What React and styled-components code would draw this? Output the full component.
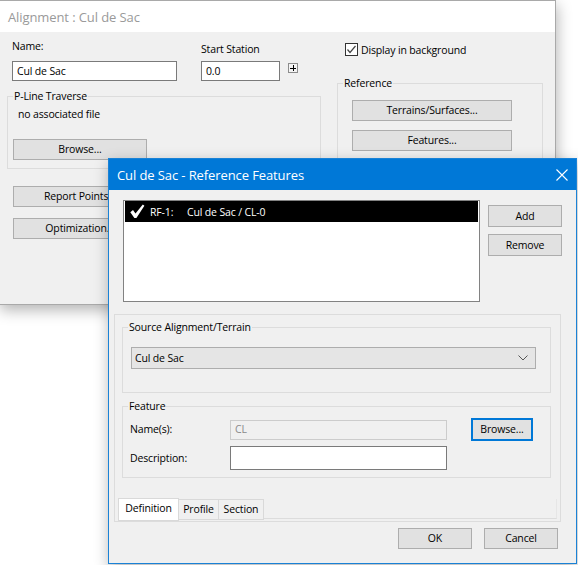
import React from "react";
import styled, { createGlobalStyle } from "styled-components";

const GlobalStyle = createGlobalStyle`
  html, body {
    margin: 0;
    padding: 0;
    background: #fff;
  }
  body {
    font-family: "Open Sans", "Noto Sans", sans-serif;
    font-size: 10.5px;
    letter-spacing: -0.15px;
    color: #000;
  }
  * {
    box-sizing: border-box;
  }
`;

const Desktop = styled.div`
  position: relative;
  width: 578px;
  height: 565px;
  overflow: hidden;
  background: #fff;
`;

/* windows sit on a free desktop, so their place is the content */
const Window = styled.div`
  position: absolute;
  left: ${p => p.$left}px;
  top: ${p => p.$top}px;
  width: ${p => p.$width}px;
  height: ${p => p.$height}px;
  border: 1px solid ${p => (p.$active ? "#1a82d6" : "#a9a9a9")};
  background: #f0f0f0;
  box-shadow: 1px 5px 14px rgba(0, 0, 0, 0.3);
  display: flex;
  flex-direction: column;
`;

const TitleBar = styled.div`
  flex: none;
  height: 31px;
  display: flex;
  align-items: center;
  justify-content: space-between;
  padding: 0 7px 0 8px;
  background: ${p => (p.$active ? "#0078d7" : "#fff")};
  color: ${p => (p.$active ? "#fff" : "#9a9a9a")};
  font-size: 13px;
  letter-spacing: -0.1px;
`;

const CloseIcon = styled.svg`
  width: 14px;
  height: 14px;
  display: block;
`;

const Label = styled.div`
  line-height: 15px;
  height: 15px;
  white-space: nowrap;
`;

const TextInput = styled.div`
  width: ${p => p.$width}px;
  height: ${p => p.$height || 20}px;
  border: 1px solid ${p => (p.$disabled ? "#cccccc" : "#7a7a7a")};
  background: ${p => (p.$disabled ? "#f0f0f0" : "#fff")};
  color: ${p => (p.$disabled ? "#8a8a8a" : "#000")};
  padding: 0 4px;
  display: flex;
  align-items: center;
  line-height: 15px;
`;

const Button = styled.div`
  width: ${p => p.$width}px;
  height: ${p => p.$height || 21}px;
  margin-top: ${p => p.$mt || 0}px;
  margin-left: ${p => p.$ml || 0}px;
  flex: none;
  background: #e1e1e1;
  border: ${p => (p.$focused ? "2px solid #0078d7" : "1px solid #adadad")};
  display: flex;
  align-items: center;
  justify-content: center;
  white-space: nowrap;
  line-height: 15px;
`;

const Group = styled.fieldset`
  margin: ${p => p.$mt || 0}px 0 0 ${p => p.$ml || 0}px;
  width: ${p => p.$width}px;
  padding: 0 0 ${p => p.$pb || 0}px 0;
  border: 1px solid #dcdcdc;
  min-width: 0;
  display: flex;
  flex-direction: column;
  align-items: flex-start;
`;

const Legend = styled.legend`
  margin-left: 5px;
  padding: 0 1px;
  line-height: 15px;
  height: 15px;
`;

/* ---------- background window ---------- */

const BackBody = styled.div`
  display: flex;
  padding-left: 7px;
`;

const LeftCol = styled.div`
  width: 314px;
  display: flex;
  flex-direction: column;
  align-items: flex-start;
`;

const FieldsRow = styled.div`
  display: flex;
  align-items: flex-end;
  padding: 7px 0 0 5px;
`;

const Field = styled.div`
  display: flex;
  flex-direction: column;
  margin-left: ${p => p.$ml || 0}px;
  ${Label} {
    margin-top: ${p => p.$labelTop || 0}px;
    margin-bottom: ${p => p.$gap}px;
  }
`;

const PlusButton = styled.div`
  width: 10px;
  height: 10px;
  margin: 0 0 8px 8px;
  border: 1px solid #8c8c8c;
  background: #f4f4f4;
  position: relative;
  &::before,
  &::after {
    content: "";
    position: absolute;
    background: #000;
  }
  &::before {
    left: 1px;
    top: 3.5px;
    width: 6px;
    height: 1px;
  }
  &::after {
    left: 3.5px;
    top: 1px;
    width: 1px;
    height: 6px;
  }
`;

const Note = styled.div`
  margin: 3px 0 0 10px;
  line-height: 15px;
`;

const RightCol = styled.div`
  margin-left: 16px;
  display: flex;
  flex-direction: column;
  align-items: flex-start;
`;

const CheckRow = styled.div`
  display: flex;
  align-items: center;
  gap: 3px;
  margin: 10px 0 0 8px;
  height: 15px;
`;

const CheckBox = styled.span`
  width: 13px;
  height: 13px;
  border: 1px solid #333;
  background: #fff;
  display: flex;
  align-items: center;
  justify-content: center;
`;

/* ---------- front window ---------- */

const FrontBody = styled.div`
  flex: 1;
  display: flex;
  flex-direction: column;
  padding: 10px 0 0 14px;
`;

const ListRow = styled.div`
  display: flex;
  align-items: flex-start;
`;

const ListBox = styled.div`
  width: 357px;
  height: 102px;
  border: 1px solid #828282;
  background: #fff;
  padding: 0 1px;
`;

const ListItem = styled.div`
  height: 21px;
  display: flex;
  align-items: center;
  background: ${p => (p.$selected ? "#000" : "transparent")};
  color: ${p => (p.$selected ? "#fff" : "#000")};
  padding-left: 5px;
  gap: 5px;
`;

const ItemCode = styled.span`
  width: 32px;
`;

const SideButtons = styled.div`
  display: flex;
  flex-direction: column;
  gap: 7px;
  margin: 5px 0 0 8px;
`;

const Frame = styled.div`
  width: 447px;
  height: 208px;
  margin: 12px 0 0 -9px;
  border: 1px solid #dcdcdc;
  display: flex;
  flex-direction: column;
  align-items: flex-start;
`;

const Combo = styled.div`
  width: 405px;
  height: 22px;
  margin: 12px 0 0 8px;
  border: 1px solid #adadad;
  background: #e5e5e5;
  display: flex;
  align-items: center;
  justify-content: space-between;
  padding: 0 7px 0 3px;
`;

const FormRow = styled.div`
  display: flex;
  align-items: center;
  margin-top: ${p => p.$mt}px;
  padding-left: 7px;
`;

const FormLabel = styled(Label)`
  width: 100px;
`;

const TabRow = styled.div`
  margin-top: auto;
  align-self: stretch;
  display: flex;
  align-items: flex-end;
  padding: 0 3px 0 3px;
  height: 23px;
`;

const Tab = styled.div`
  width: ${p => p.$width}px;
  height: ${p => (p.$active ? 23 : 21)}px;
  margin-bottom: ${p => (p.$active ? 0 : 1)}px;
  background: ${p => (p.$active ? "#fff" : "#f0f0f0")};
  border: 1px solid #d9d9d9;
  border-left: ${p => (p.$first ? "1px solid #d9d9d9" : "none")};
  display: flex;
  align-items: center;
  justify-content: center;
  line-height: 15px;
  padding-bottom: ${p => (p.$active ? 2 : 0)}px;
`;

const TabFiller = styled.div`
  flex: 1;
  height: 20px;
  margin-bottom: 2px;
  border-bottom: 1px solid #dcdcdc;
  border-right: 1px solid #e6e6e6;
`;

const Footer = styled.div`
  display: flex;
  justify-content: flex-end;
  gap: 12px;
  padding-right: 18px;
  margin-top: 6px;
`;

function ListCheck() {
  return (
    <svg width="15" height="15" viewBox="0 0 15 15">
      <path d="M0.3 8.3 L3 6 L5.5 9.6 L12.8 0.6 L14.4 1.8 L6.4 14 L4.4 14 Z" fill="#fff" />
    </svg>
  );
}

export default function App() {
  return (
    <Desktop>
      <GlobalStyle />

      <Window $left={-1} $top={0} $width={557} $height={305}>
        <TitleBar>
          <span>Alignment : Cul de Sac</span>
        </TitleBar>
        <BackBody>
          <LeftCol>
            <FieldsRow>
              <Field $gap={7}>
                <Label>Name:</Label>
                <TextInput $width={165}>Cul de Sac</TextInput>
              </Field>
              <Field $ml={24} $labelTop={3} $gap={4}>
                <Label>Start Station</Label>
                <TextInput $width={79}>0.0</TextInput>
              </Field>
              <PlusButton />
            </FieldsRow>

            <Group $mt={8} $width={314} $pb={8}>
              <Legend>P-Line Traverse</Legend>
              <Note>no associated file</Note>
              <Button $width={134} $mt={17} $ml={5}>Browse...</Button>
            </Group>

            <Button $width={134} $mt={17} $ml={6}>Report Points...</Button>
            <Button $width={134} $mt={11} $ml={6}>Optimization...</Button>
          </LeftCol>

          <RightCol>
            <CheckRow>
              <CheckBox>
                <svg width="11" height="11" viewBox="0 0 11 11">
                  <polyline points="1.5,5.5 4,8.5 9.5,2" fill="none" stroke="#444" strokeWidth="1.2" />
                </svg>
              </CheckBox>
              <span>Display in background</span>
            </CheckRow>

            <Group $mt={19} $width={206} $pb={40}>
              <Legend>Reference</Legend>
              <Button $width={160} $mt={9} $ml={14}>Terrains/Surfaces...</Button>
              <Button $width={160} $mt={9} $ml={14}>Features...</Button>
            </Group>
          </RightCol>
        </BackBody>
      </Window>

      <Window $active $left={108} $top={158} $width={469} $height={406}>
        <TitleBar $active>
          <span>Cul de Sac - Reference Features</span>
          <CloseIcon viewBox="0 0 14 14">
            <path d="M1.5 1.5 L12.5 12.5 M12.5 1.5 L1.5 12.5" stroke="#fff" strokeWidth="1.1" />
          </CloseIcon>
        </TitleBar>
        <FrontBody>
          <ListRow>
            <ListBox>
              <ListItem $selected>
                <ListCheck />
                <ItemCode>RF-1:</ItemCode>
                <span>Cul de Sac / CL-0</span>
              </ListItem>
            </ListBox>
            <SideButtons>
              <Button $width={74} $height={22}>Add</Button>
              <Button $width={74} $height={22}>Remove</Button>
            </SideButtons>
          </ListRow>

          <Frame>
            <Group $mt={5} $ml={7} $width={429} $pb={23}>
              <Legend>Source Alignment/Terrain</Legend>
              <Combo>
                <span>Cul de Sac</span>
                <svg width="10" height="6" viewBox="0 0 10 6">
                  <polyline points="0.5,0.5 5,5 9.5,0.5" fill="none" stroke="#555" strokeWidth="1" />
                </svg>
              </Combo>
            </Group>

            <Group $mt={6} $ml={7} $width={429} $pb={7}>
              <Legend>Feature</Legend>
              <FormRow $mt={4}>
                <FormLabel>Name(s):</FormLabel>
                <TextInput $width={217} $disabled>CL</TextInput>
                <Button $width={62} $height={23} $ml={24} $focused>Browse...</Button>
              </FormRow>
              <FormRow $mt={5}>
                <FormLabel>Description:</FormLabel>
                <TextInput $width={217} $height={24} />
              </FormRow>
            </Group>

            <TabRow>
              <Tab $active $first $width={61}>Definition</Tab>
              <Tab $width={40}>Profile</Tab>
              <Tab $width={45}>Section</Tab>
              <TabFiller />
            </TabRow>
          </Frame>

          <Footer>
            <Button $width={74}>OK</Button>
            <Button $width={74}>Cancel</Button>
          </Footer>
        </FrontBody>
      </Window>
    </Desktop>
  );
}
